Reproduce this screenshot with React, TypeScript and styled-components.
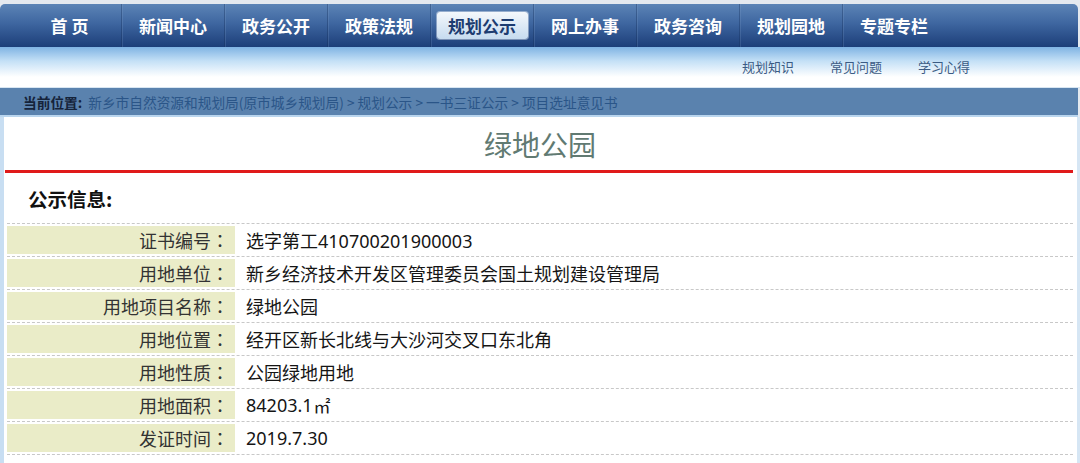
import React from 'react';
import styled, { createGlobalStyle } from 'styled-components';

const GlobalStyle = createGlobalStyle`
  html, body {
    margin: 0;
    padding: 0;
    background: #ffffff;
    font-family: "Noto Sans CJK SC", "Noto Sans", sans-serif;
  }
  * { box-sizing: border-box; }
`;

const Page = styled.div`
  width: 1080px;
  height: 463px;
  overflow: hidden;
  display: flex;
  flex-direction: column;
  background: #e4e9ef;
  padding-top: 4px;
`;

const NavBar = styled.nav`
  height: 43px;
  display: flex;
  align-items: center;
  padding-left: 18px;
  margin-right: 2px;
  border-radius: 5px 5px 0 0;
  background: linear-gradient(#5c84b6 0%, #3e66a0 45%, #1c3e79 100%);
`;

const NavItem = styled.div<{ $first?: boolean }>`
  width: 103px;
  height: 100%;
  display: flex;
  align-items: center;
  justify-content: center;
  border-left: ${(p) => (p.$first ? 'none' : '1px solid rgba(20, 45, 90, 0.35)')};
  box-shadow: ${(p) => (p.$first ? 'none' : 'inset 1px 0 0 rgba(140, 170, 210, 0.2)')};
`;

const NavLabel = styled.span<{ $active?: boolean }>`
  font-size: 17px;
  font-weight: 700;
  color: ${(p) => (p.$active ? '#1d3c70' : '#ffffff')};
  ${(p) =>
    p.$active &&
    `
    width: 91px;
    height: 27px;
    line-height: 27px;
    text-align: center;
    border-radius: 3px;
    background: linear-gradient(#f4f8fc, #c6dbef);
    box-shadow: 0 0 0 1px rgba(255,255,255,0.4);
  `}
`;

const SubNav = styled.div`
  height: 41px;
  display: flex;
  justify-content: flex-end;
  align-items: center;
  gap: 36px;
  padding-right: 110px;
  padding-bottom: 2px;
  background: linear-gradient(#7fb3e3 0%, #c4e0f6 35%, #ffffff 75%, #ffffff 100%);
  border-bottom: 1px solid #d8e6f2;
`;

const SubLink = styled.a`
  font-size: 13px;
  color: #3b5b84;
  text-decoration: none;
`;

const Breadcrumb = styled.div`
  height: 29px;
  display: flex;
  align-items: center;
  padding-left: 23px;
  margin-right: 2px;
  background: #5a82ae;
  border-bottom: 2px solid #b9d5ee;
  font-size: 13.7px;
  color: #2a5588;
`;

const Here = styled.span`
  color: #15233a;
  font-weight: 700;
  margin-right: 6px;
`;

const Content = styled.div`
  flex: 1;
  background: #ffffff;
  border-left: 4px solid #c8def2;
  border-right: 3px solid #d6e6f4;
  padding: 0 4px 0 3px;
  display: flex;
  flex-direction: column;
`;

const Title = styled.h1`
  margin: 0;
  height: 53px;
  display: flex;
  align-items: center;
  justify-content: center;
  font-size: 28px;
  font-weight: 400;
  color: #617a72;
  font-family: "Noto Sans CJK SC", serif;
`;

const RedRule = styled.div`
  height: 3px;
  background: #e01a1a;
  margin: 0 0 0 -2px;
`;

const SectionTitle = styled.h2`
  margin: 0;
  height: 50px;
  display: flex;
  align-items: center;
  padding-left: 21px;
  font-size: 19.5px;
  font-weight: 700;
  color: #111111;
`;

const Table = styled.div`
  display: flex;
  flex-direction: column;
  border-top: 1px dashed #c8c8c8;
`;

const Row = styled.div`
  height: 33px;
  display: grid;
  grid-template-columns: 228px 1fr;
  border-bottom: 1px dashed #c8c8c8;
  padding: 2px 0;
`;

const Label = styled.div`
  background: #eaecc8;
  display: flex;
  align-items: center;
  justify-content: flex-end;
  padding-right: 6px;
  font-size: 18px;
  color: #333333;
`;

const Colon = styled.span`
  font-family: "Noto Sans CJK TC", "Noto Sans CJK SC", sans-serif;
`;

const Value = styled.div`
  display: flex;
  align-items: center;
  padding-left: 11px;
  font-size: 18px;
  color: #151515;
  font-family: "Noto Sans", "Noto Sans CJK SC", sans-serif;
`;

const Unit = styled.span`
  font-family: "Noto Sans CJK SC", sans-serif;
  font-size: 17px;
  margin-left: 1px;
`;

const navItems = ['首 页', '新闻中心', '政务公开', '政策法规', '规划公示', '网上办事', '政务咨询', '规划园地', '专题专栏'];

const rows: { label: string; value: React.ReactNode }[] = [
  { label: '证书编号', value: '选字第工410700201900003' },
  { label: '用地单位', value: '新乡经济技术开发区管理委员会国土规划建设管理局' },
  { label: '用地项目名称', value: '绿地公园' },
  { label: '用地位置', value: '经开区新长北线与大沙河交叉口东北角' },
  { label: '用地性质', value: '公园绿地用地' },
  { label: '用地面积', value: <>84203.1<Unit>㎡</Unit></> },
  { label: '发证时间', value: '2019.7.30' },
];

export default function App() {
  return (
    <Page>
      <GlobalStyle />
      <NavBar>
        {navItems.map((item, i) => (
          <NavItem key={item} $first={i === 0}>
            <NavLabel $active={item === '规划公示'}>{item}</NavLabel>
          </NavItem>
        ))}
      </NavBar>
      <SubNav>
        <SubLink>规划知识</SubLink>
        <SubLink>常见问题</SubLink>
        <SubLink>学习心得</SubLink>
      </SubNav>
      <Breadcrumb>
        <Here>当前位置:</Here>
        新乡市自然资源和规划局(原市城乡规划局) &gt; 规划公示 &gt; 一书三证公示 &gt; 项目选址意见书
      </Breadcrumb>
      <Content>
        <Title>绿地公园</Title>
        <RedRule />
        <SectionTitle>公示信息:</SectionTitle>
        <Table>
          {rows.map((r) => (
            <Row key={r.label}>
              <Label>
                {r.label}
                <Colon>：</Colon>
              </Label>
              <Value>{r.value}</Value>
            </Row>
          ))}
        </Table>
      </Content>
    </Page>
  );
}
